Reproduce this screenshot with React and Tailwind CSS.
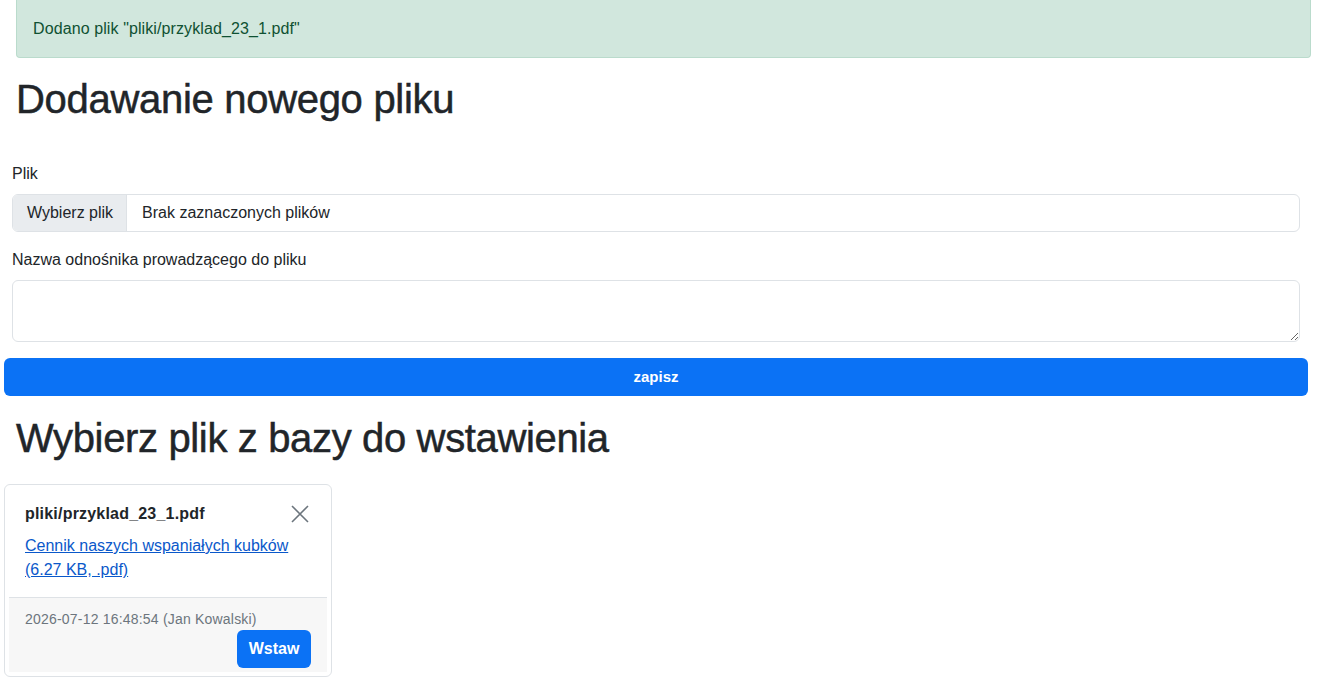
const App = () => {
  return (
    <div className="min-h-screen bg-white text-[#212529] font-['Liberation_Sans',Arial,sans-serif]">
      {/* Flash message */}
      <div className="ml-4 mr-[9px] h-[58px] flex items-center px-[16px] bg-[#d1e7dd] border border-[#badbcc] rounded-b-[4px] border-t-0 text-[#0f5132] text-base tracking-[0.1px]">
        Dodano plik "pliki/przyklad_23_1.pdf"
      </div>

      <h1 className="px-4 mt-[17px] text-[40px] leading-[48px] font-medium tracking-[-0.3px] [-webkit-text-stroke:0.5px_#212529]">
        Dodawanie nowego pliku
      </h1>

      <form className="mt-[39px]" onSubmit={(e) => e.preventDefault()}>
        <div className="px-3">
          <label className="block text-base leading-6 mb-2">Plik</label>
          <div className="flex h-[38px] border border-[#dee2e6] rounded-[6px] overflow-hidden mr-[8px]">
            <span className="flex items-center pl-[14px] pr-[13px] bg-[#e9ecef] border-r border-[#dee2e6] text-base">Wybierz plik</span>
            <span className="flex items-center pl-[15px] text-base">Brak zaznaczonych plików</span>
          </div>

          <label className="block text-base leading-6 mt-[16px] mb-2">Nazwa odnośnika prowadzącego do pliku</label>
          <textarea className="block w-[calc(100%-8px)] h-[62px] border border-[#dee2e6] rounded-[6px] px-3 py-2 text-base outline-none" />
        </div>

        <button className="mt-4 ml-1 w-[calc(100%-16px)] h-[38px] bg-[#0b72f5] rounded-[6px] text-white text-[15px] font-bold">
          zapisz
        </button>
      </form>

      <h2 className="px-4 mt-[18px] text-[40px] leading-[48px] font-medium tracking-[-0.35px] [-webkit-text-stroke:0.5px_#212529]">
        Wybierz plik z bazy do wstawienia
      </h2>

      {/* File card */}
      <div className="ml-1 mt-[22px] w-[328px] border border-[#dee2e6] rounded-[6px] p-[4px]">
        <div className="px-4 pt-[13px] pb-[15px]">
          <div className="flex items-start justify-between">
            <span className="font-bold text-base leading-6 tracking-[0.2px]">pliki/przyklad_23_1.pdf</span>
            <svg className="w-[18px] h-[18px] mt-[3px] mr-[2px] text-[#6c757d]" viewBox="0 0 18 18" fill="none" stroke="currentColor" strokeWidth="1.6">
              <path d="M1 1l16 16M17 1L1 17" />
            </svg>
          </div>
          <a href="#" className="block mt-2 text-[#0a58ca] underline text-base leading-6">
            Cennik naszych wspaniałych kubków (6.27 KB, .pdf)
          </a>
        </div>
        <div className="bg-[#f7f7f7] border-t border-[#dee2e6] px-4 pt-[11px] pb-[4px]">
          <div className="text-[14px] leading-5 text-[#6c757d] tracking-[0.2px]">2026-07-12 16:48:54 (Jan Kowalski)</div>
          <div className="flex justify-end mt-[1px]">
            <button className="h-[38px] w-[74px] bg-[#0b72f5] rounded-[6px] text-white font-bold text-base">Wstaw</button>
          </div>
        </div>
      </div>
    </div>
  );
};

export default App;
